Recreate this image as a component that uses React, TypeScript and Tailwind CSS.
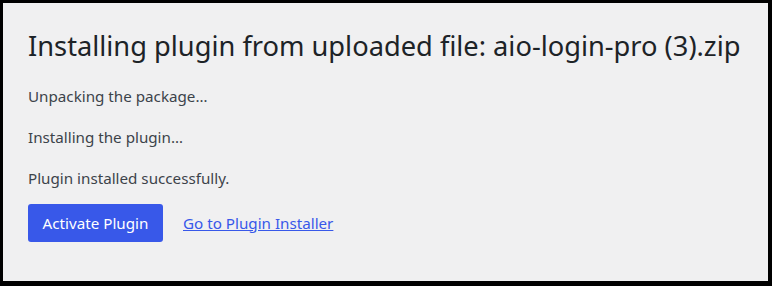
export default function App() {
  return (
    <div className="h-[286px] w-[772px] bg-black pt-[3px] pl-[3px] pr-[4px] pb-[5px]">
      <div
        className="h-full w-full bg-[#f0f0f1] pl-[25px] pt-[26px]"
        style={{ fontFamily: '"Noto Sans", "Open Sans", sans-serif' }}
      >
        <h1 className="text-[27.25px] leading-[34px] text-[#1d2327]">
          Installing plugin from uploaded file: aio-login-pro (3).zip
        </h1>
        <div className="mt-[23px] flex flex-col gap-[20px] text-[15.2px] leading-[21px] text-[#3c434a]">
          <p>Unpacking the package…</p>
          <p>Installing the plugin…</p>
          <p>Plugin installed successfully.</p>
        </div>
        <div className="mt-[15px] flex items-center gap-[20px]">
          <button className="h-[38px] w-[135px] rounded-[3px] bg-[#3858e9] text-[15.2px] text-white">
            Activate Plugin
          </button>
          <a href="#" className="text-[15.2px] text-[#3858e9] underline">
            Go to Plugin Installer
          </a>
        </div>
      </div>
    </div>
  )
}
